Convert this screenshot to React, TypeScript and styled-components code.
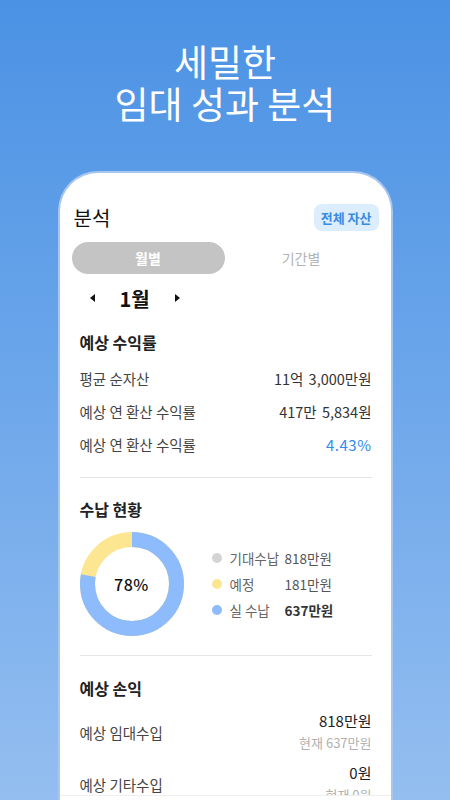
import styled, { createGlobalStyle } from 'styled-components';

const GlobalStyle = createGlobalStyle`
  html, body {
    margin: 0;
    padding: 0;
  }
  body {
    height: 800px;
    overflow: hidden;
    font-family: 'Noto Sans CJK KR', 'Noto Sans', sans-serif;
    background: linear-gradient(180deg, #4b92e4 0%, #6aa5ea 45%, #94bef0 100%);
  }
`;

const Page = styled.div`
  display: flex;
  flex-direction: column;
  align-items: center;
  padding-top: 40px;
`;

const Headline = styled.h1`
  margin: 0;
  color: #fff;
  font-size: 37px;
  line-height: 42px;
  font-weight: 400;
  text-align: center;
`;

const Card = styled.div`
  position: relative;
  box-sizing: border-box;
  width: 335px;
  height: 660px;
  margin-top: 47px;
  background: #fff;
  border: 2px solid #a9c7ee;
  border-bottom: none;
  border-radius: 40px 40px 0 0;
  overflow: hidden;
`;

const CardHeader = styled.div`
  display: flex;
  justify-content: space-between;
  align-items: center;
  padding: 30px 12px 0 14px;
`;

const CardTitle = styled.span`
  font-size: 20px;
  color: #111;
`;

const ScopeButton = styled.button`
  border: none;
  height: 27px;
  padding: 0 7px;
  border-radius: 8px;
  background: #dcedfd;
  color: #3b8ce4;
  font-family: inherit;
  font-size: 13px;
  font-weight: 700;
`;

const Segments = styled.div`
  display: grid;
  grid-template-columns: 1fr 1fr;
  margin: 10px 13px 0 12px;
`;

const Segment = styled.div<{ $active?: boolean }>`
  height: 32px;
  border-radius: 16px;
  display: flex;
  align-items: center;
  justify-content: center;
  font-size: 14px;
  font-weight: ${(p) => (p.$active ? 700 : 400)};
  color: ${(p) => (p.$active ? '#fff' : '#b3b3b3')};
  background: ${(p) => (p.$active ? '#c4c4c4' : 'transparent')};
`;

const MonthRow = styled.div`
  display: flex;
  align-items: center;
  height: 28px;
  margin-top: 10px;
  padding-left: 30px;
  gap: 25px;
`;

const Arrow = styled.span<{ $dir: 'left' | 'right' }>`
  width: 0;
  height: 0;
  border-top: 4px solid transparent;
  border-bottom: 4px solid transparent;
  ${(p) =>
    p.$dir === 'left'
      ? 'border-right: 5px solid #111;'
      : 'border-left: 5px solid #111;'}
`;

const Month = styled.span`
  font-size: 20px;
  font-weight: 700;
  color: #111;
`;

const Section = styled.section<{ $top: number; $bottom: number; $line?: boolean }>`
  margin: 0 19px 0 20px;
  padding: ${(p) => p.$top}px 0 ${(p) => p.$bottom}px;
  border-bottom: ${(p) => (p.$line ? '1px solid #e6e6e6' : 'none')};
`;

const SectionTitle = styled.h2`
  margin: 0;
  font-size: 16px;
  line-height: 24px;
  font-weight: 700;
  color: #222;
`;

const Rows = styled.div<{ $gap?: number }>`
  display: flex;
  flex-direction: column;
  margin-top: ${(p) => p.$gap ?? 8}px;
`;

const Row = styled.div<{ $h: number }>`
  display: flex;
  justify-content: space-between;
  align-items: center;
  height: ${(p) => p.$h}px;
`;

const Label = styled.span`
  font-size: 14.5px;
  color: #444;
`;

const Value = styled.span<{ $accent?: boolean }>`
  font-size: ${(p) => (p.$accent ? '15px' : '14.5px')};
  color: ${(p) => (p.$accent ? '#2d8cf0' : '#333')};
  letter-spacing: ${(p) => (p.$accent ? '0.5px' : '0')};
  word-spacing: 2px;
`;

const Amounts = styled.div`
  display: flex;
  flex-direction: column;
  align-items: flex-end;
`;

const Main = styled.span`
  font-size: 15px;
  line-height: 22px;
  color: #222;
`;

const Sub = styled.span`
  font-size: 13px;
  line-height: 22px;
  color: #b0b0b0;
`;

const ChartRow = styled.div`
  display: flex;
  align-items: center;
  gap: 28px;
  margin-top: 11px;
`;

const Donut = styled.div`
  position: relative;
  width: 104px;
  height: 104px;
  display: flex;
  align-items: center;
  justify-content: center;
  svg {
    position: absolute;
    inset: 0;
  }
`;

const DonutLabel = styled.span`
  font-size: 16px;
  font-weight: 500;
  color: #111;
  letter-spacing: 0.5px;
`;

const Legend = styled.ul`
  list-style: none;
  margin: 0;
  padding: 0;
  display: flex;
  flex-direction: column;
`;

const LegendItem = styled.li`
  display: grid;
  grid-template-columns: 18px 55px auto;
  align-items: center;
  height: 26px;
`;

const Dot = styled.span<{ $color: string }>`
  width: 10px;
  height: 10px;
  border-radius: 50%;
  background: ${(p) => p.$color};
`;

const LegendLabel = styled.span`
  font-size: 13.5px;
  color: #666;
`;

const LegendValue = styled.span<{ $strong?: boolean }>`
  font-size: 13.5px;
  color: ${(p) => (p.$strong ? '#333' : '#555')};
  font-weight: ${(p) => (p.$strong ? 700 : 400)};
`;

const BottomBar = styled.div`
  position: absolute;
  left: 0;
  right: 0;
  top: 622px;
  height: 40px;
  border-top: 1px solid #efefef;
  background: #fff;
`;

const legend = [
  { label: '기대수납', value: '818만원', color: '#d4d4d4' },
  { label: '예정', value: '181만원', color: '#fde692' },
  { label: '실 수납', value: '637만원', color: '#8dbbfb', strong: true },
];

function RatioDonut({ ratio }: { ratio: number }) {
  const r = 44.5;
  const c = 2 * Math.PI * r;
  return (
    <Donut>
      <svg width="104" height="104" viewBox="0 0 104 104">
        <g transform="rotate(-90 52 52)">
          <circle cx="52" cy="52" r={r} fill="none" stroke="#fde692" strokeWidth="15" />
          <circle
            cx="52"
            cy="52"
            r={r}
            fill="none"
            stroke="#8dbbfb"
            strokeWidth="15"
            strokeDasharray={`${c * ratio} ${c}`}
          />
        </g>
      </svg>
      <DonutLabel>78%</DonutLabel>
    </Donut>
  );
}

export default function App() {
  return (
    <>
      <GlobalStyle />
      <Page>
        <Headline>
          세밀한
          <br />
          임대 성과 분석
        </Headline>
        <Card>
          <CardHeader>
            <CardTitle>분석</CardTitle>
            <ScopeButton>전체 자산</ScopeButton>
          </CardHeader>
          <Segments>
            <Segment $active>월별</Segment>
            <Segment>기간별</Segment>
          </Segments>
          <MonthRow>
            <Arrow $dir="left" />
            <Month>1월</Month>
            <Arrow $dir="right" />
          </MonthRow>

          <Section $top={18} $bottom={16} $line>
            <SectionTitle>예상 수익률</SectionTitle>
            <Rows>
              <Row $h={33}>
                <Label>평균 순자산</Label>
                <Value>11억 3,000만원</Value>
              </Row>
              <Row $h={33}>
                <Label>예상 연 환산 수익률</Label>
                <Value>417만 5,834원</Value>
              </Row>
              <Row $h={33}>
                <Label>예상 연 환산 수익률</Label>
                <Value $accent>4.43%</Value>
              </Row>
            </Rows>
          </Section>

          <Section $top={19} $bottom={19} $line>
            <SectionTitle>수납 현황</SectionTitle>
            <ChartRow>
              <RatioDonut ratio={637 / 818} />
              <Legend>
                {legend.map((item) => (
                  <LegendItem key={item.label}>
                    <Dot $color={item.color} />
                    <LegendLabel>{item.label}</LegendLabel>
                    <LegendValue $strong={item.strong}>{item.value}</LegendValue>
                  </LegendItem>
                ))}
              </Legend>
            </ChartRow>
          </Section>

          <Section $top={20} $bottom={0}>
            <SectionTitle>예상 손익</SectionTitle>
            <Rows $gap={6}>
              <Row $h={52}>
                <Label>예상 임대수입</Label>
                <Amounts>
                  <Main>818만원</Main>
                  <Sub>현재 637만원</Sub>
                </Amounts>
              </Row>
              <Row $h={52}>
                <Label>예상 기타수입</Label>
                <Amounts>
                  <Main>0원</Main>
                  <Sub>현재 0원</Sub>
                </Amounts>
              </Row>
            </Rows>
          </Section>
          <BottomBar />
        </Card>
      </Page>
    </>
  );
}
